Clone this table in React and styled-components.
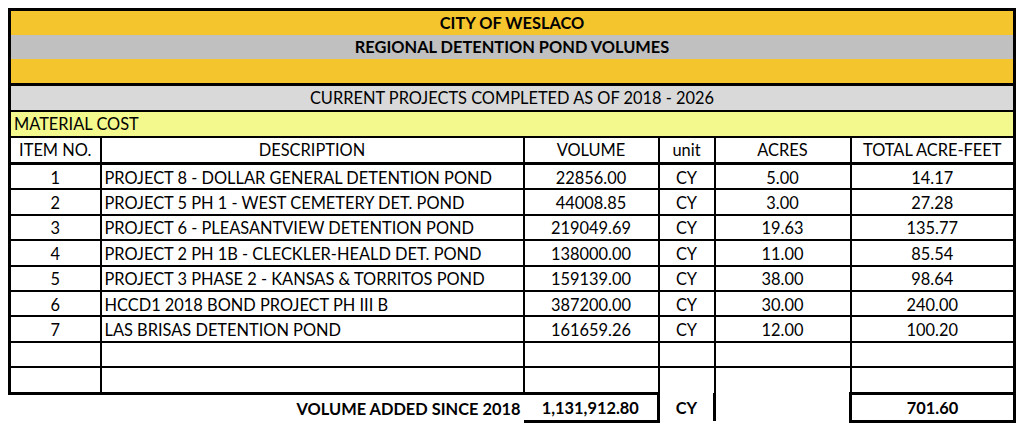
import React from "react";
import styled, { createGlobalStyle } from "styled-components";

const GlobalStyle = createGlobalStyle`
  html, body {
    margin: 0;
    padding: 0;
    background: #ffffff;
  }
`;

const projects = [
  { no: 1, desc: "PROJECT 8 - DOLLAR GENERAL DETENTION POND", volume: "22856.00", acres: "5.00", total: "14.17" },
  { no: 2, desc: "PROJECT 5 PH 1 - WEST CEMETERY DET. POND", volume: "44008.85", acres: "3.00", total: "27.28" },
  { no: 3, desc: "PROJECT 6 - PLEASANTVIEW DETENTION POND", volume: "219049.69", acres: "19.63", total: "135.77" },
  { no: 4, desc: "PROJECT 2 PH 1B - CLECKLER-HEALD DET. POND", volume: "138000.00", acres: "11.00", total: "85.54" },
  { no: 5, desc: "PROJECT 3 PHASE 2 - KANSAS & TORRITOS POND", volume: "159139.00", acres: "38.00", total: "98.64" },
  { no: 6, desc: "HCCD1 2018 BOND PROJECT PH III B", volume: "387200.00", acres: "30.00", total: "240.00" },
  { no: 7, desc: "LAS BRISAS DETENTION POND", volume: "161659.26", acres: "12.00", total: "100.20" },
];

const Page = styled.div`
  padding: 8px 0 0 8px;
`;

const Sheet = styled.table`
  border-collapse: collapse;
  table-layout: fixed;
  width: 1008px;
  font-family: Lato, "Liberation Sans", sans-serif;
  font-size: 16.4px;
  line-height: 20px;
  color: #000;
`;

const TitleCell = styled.td`
  height: 24px;
  padding: 0;
  text-align: center;
  font-weight: ${(p) => (p.$bold ? 700 : 400)};
  background: ${(p) => p.$bg};
  border-left: 3px solid #000;
  border-right: 3px solid #000;
  border-top: ${(p) => (p.$top ? `${p.$top}px solid #000` : "none")};
  border-bottom: ${(p) => (p.$bottom ? `${p.$bottom}px solid #000` : "none")};
`;

const LabelCell = styled(TitleCell)`
  text-align: left;
  padding-left: 3px;
`;

const HeadCell = styled.td`
  height: 24px;
  padding: 0 2px;
  text-align: ${(p) => p.$align || "center"};
  white-space: nowrap;
  border: 2px solid #000;
  border-bottom-width: 3px;
  &:first-child {
    border-left-width: 3px;
  }
  &:last-child {
    border-right-width: 3px;
  }
`;

const DataCell = styled.td`
  height: 21.4px;
  padding: 2px 3px 0;
  text-align: ${(p) => p.$align || "center"};
  white-space: nowrap;
  border: 2px solid #000;
  border-bottom: ${(p) => (p.$open ? "none" : p.$last ? "3px solid #000" : "2px solid #000")};
  &:first-child {
    border-left-width: 3px;
  }
  &:last-child {
    border-right-width: 3px;
  }
`;

const FootLabel = styled.td`
  height: 23px;
  padding: 2px 3px 0;
  text-align: right;
  font-weight: 700;
  white-space: nowrap;
  border: none;
  border-top: 3px solid #000;
`;

const FootCell = styled.td`
  height: 23px;
  padding: 2px 3px 0;
  text-align: center;
  font-weight: 700;
  white-space: nowrap;
  border-top: ${(p) => (p.$boxed ? "3px solid #000" : "none")};
  border-bottom: ${(p) => (p.$boxed ? "3px solid #000" : "none")};
  border-left: ${(p) => (p.$left ? "3px solid #000" : "none")};
  border-right: ${(p) => (p.$right ? "3px solid #000" : "none")};
`;

const Columns = () => (
  <colgroup>
    <col style={{ width: 91 }} />
    <col style={{ width: 423 }} />
    <col style={{ width: 135 }} />
    <col style={{ width: 56 }} />
    <col style={{ width: 136 }} />
    <col style={{ width: 164 }} />
  </colgroup>
);

export default function App() {
  return (
    <Page>
      <GlobalStyle />
      <Sheet>
        <Columns />
        <tbody>
          <tr>
            <TitleCell colSpan={6} $bg="#F5C52E" $bold $top={3}>
              CITY OF WESLACO
            </TitleCell>
          </tr>
          <tr>
            <TitleCell colSpan={6} $bg="#C0C0C0" $bold>
              REGIONAL DETENTION POND VOLUMES
            </TitleCell>
          </tr>
          <tr>
            <TitleCell colSpan={6} $bg="#F5C52E" $bottom={3} />
          </tr>
          <tr>
            <TitleCell colSpan={6} $bg="#D9D9D9" $bottom={2}>
              CURRENT PROJECTS COMPLETED AS OF 2018 - 2026
            </TitleCell>
          </tr>
          <tr>
            <LabelCell colSpan={6} $bg="#F3F98C" $bottom={2}>
              MATERIAL COST
            </LabelCell>
          </tr>
          <tr>
            <HeadCell>ITEM NO.</HeadCell>
            <HeadCell>DESCRIPTION</HeadCell>
            <HeadCell>VOLUME</HeadCell>
            <HeadCell>unit</HeadCell>
            <HeadCell>ACRES</HeadCell>
            <HeadCell>TOTAL ACRE-FEET</HeadCell>
          </tr>
          {projects.map((p) => (
            <tr key={p.no}>
              <DataCell>{p.no}</DataCell>
              <DataCell $align="left">{p.desc}</DataCell>
              <DataCell>{p.volume}</DataCell>
              <DataCell>CY</DataCell>
              <DataCell>{p.acres}</DataCell>
              <DataCell>{p.total}</DataCell>
            </tr>
          ))}
          <tr>
            <DataCell />
            <DataCell />
            <DataCell />
            <DataCell />
            <DataCell />
            <DataCell />
          </tr>
          <tr>
            <DataCell $last />
            <DataCell $last />
            <DataCell $last />
            <DataCell $open />
            <DataCell $open />
            <DataCell $last />
          </tr>
          <tr>
            <FootLabel colSpan={2}>VOLUME ADDED SINCE 2018</FootLabel>
            <FootCell $boxed $right>
              1,131,912.80
            </FootCell>
            <FootCell $right>CY</FootCell>
            <FootCell />
            <FootCell $boxed $left $right>
              701.60
            </FootCell>
          </tr>
        </tbody>
      </Sheet>
    </Page>
  );
}
